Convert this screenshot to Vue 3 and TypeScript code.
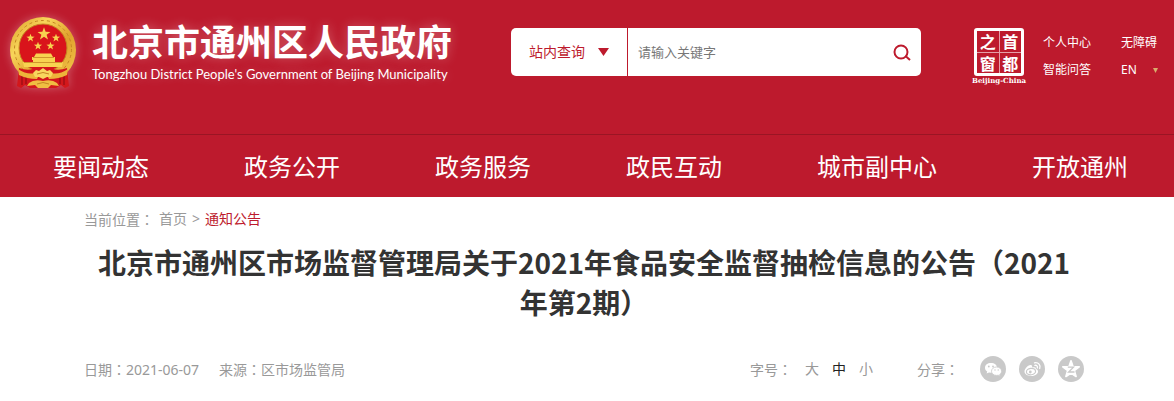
<script setup lang="ts">
import { ref } from 'vue'

const navItems: string[] = ['要闻动态', '政务公开', '政务服务', '政民互动', '城市副中心', '开放通州']
const sizes: string[] = ['大', '中', '小']
const activeSize = ref('中')
const scope = ref('站内查询')
const language = ref('EN')
const keyword = ref('')
const star = '0,-10 2.4,-3.2 9.5,-3.1 3.8,1.2 5.9,8.1 0,4 -5.9,8.1 -3.8,1.2 -9.5,-3.1 -2.4,-3.2'
</script>

<template>
  <div class="page">
    <header class="header">
      <div class="masthead">
        <a class="brand" href="#">
          <svg class="emblem" viewBox="0 0 68 72" aria-hidden="true">
            <defs>
              <linearGradient id="gold" x1="0" y1="0" x2="1" y2="1">
                <stop offset="0" stop-color="#d99a22" />
                <stop offset="0.3" stop-color="#f8d55a" />
                <stop offset="0.6" stop-color="#e0a02c" />
                <stop offset="1" stop-color="#f6cf50" />
              </linearGradient>
            </defs>
            <circle cx="34" cy="33" r="33" fill="url(#gold)" />
            <circle cx="34" cy="32" r="28.500" fill="none" stroke="#c58622" stroke-width="1" stroke-dasharray="3 3" />
            <circle cx="34" cy="31" r="24" fill="#d9141b" stroke="#c58622" />
            <path d="M10 51 Q18 54 24 52 L34 50 L44 52 Q50 54 58 51 L60 69 L56 71 L52 68 L47 71 H21 L16 68 L12 71 L8 69Z" fill="#d3171b" />
            <path d="M13 58V68M17 59V67M51 59V67M55 58V68" stroke="#a30f16" stroke-width="1.500" />
            <g fill="#f8d350">
              <polygon :points="star" transform="translate(35 17) scale(0.680)" />
              <polygon :points="star" transform="translate(21.500 21) scale(0.430)" />
              <polygon :points="star" transform="translate(47 21) scale(0.430)" />
              <polygon :points="star" transform="translate(29 29) scale(0.430)" />
              <polygon :points="star" transform="translate(41.500 29) scale(0.430)" />
              <path d="M27 36.500H42L44 40H46V43H23V40H25ZM24 42H46V45H54L53 50H15L14 45H24Z" />
            </g>
            <path d="M24 40.500H45M15 45.500H53" stroke="#c58622" stroke-width="0.800" />
            <path d="M9 52 Q18 58 26 56 L30 58 L28 62 Q18 62 10 58ZM59 52 Q50 58 42 56 L38 58 L40 62 Q50 62 58 58Z" fill="#edb43a" />
            <path d="M24 56L27 53L30 54L34 51L38 54L41 53L44 56L42 60L38 60L34 62L30 60L26 60Z" fill="#f8d75e" />
            <path d="M28 57Q34 54 40 57" fill="none" stroke="#c58622" stroke-width="1" />
            <path d="M20 66Q25 62 34 64Q43 62 48 66L50 69L42 68L39 71H29L26 68L18 69Z" fill="#f0bd42" />
            <path d="M28 67Q34 64 40 67" fill="none" stroke="#c58622" stroke-width="1" />
          </svg>
          <span class="brand-text">
            <span class="brand-cn">北京市通州区人民政府</span>
            <span class="brand-en">Tongzhou District People's Government of Beijing Municipality</span>
          </span>
        </a>

        <form class="search" role="search" @submit.prevent>
          <label class="scope">
            <select v-model="scope" aria-label="查询范围">
              <option>站内查询</option>
            </select>
            <svg width="11" height="8" viewBox="0 0 11 8" aria-hidden="true"><path d="M0 0H11L5.500 8Z" fill="#bd1a2d" /></svg>
          </label>
          <input v-model="keyword" type="text" placeholder="请输入关键字" aria-label="关键字" />
          <button type="submit" aria-label="搜索">
            <svg width="18" height="18" viewBox="0 0 18 18" fill="none" stroke="#bd1a2d" stroke-width="2" aria-hidden="true">
              <circle cx="8" cy="9" r="6.500" /><path d="M12.500 13L17 17" />
            </svg>
          </button>
        </form>

        <a class="capital" href="#">
          <span class="seal">
            <span>之</span><span>首</span><span>窗</span><span>都</span>
          </span>
          <span class="capital-en">Beijing-China</span>
        </a>

        <div class="tools">
          <a href="#">个人中心</a>
          <a href="#">无障碍</a>
          <a href="#">智能问答</a>
          <label class="language">
            <select v-model="language" aria-label="语言">
              <option>EN</option>
            </select>
            <svg width="5" height="5" viewBox="0 0 5 5" aria-hidden="true"><path d="M0 0H5L2.500 5Z" fill="#d9ae6c" /></svg>
          </label>
        </div>
      </div>

      <nav class="nav">
        <a v-for="item in navItems" :key="item" href="#">{{ item }}</a>
      </nav>
    </header>

    <main class="article">
      <nav class="crumbs">
        <span>当前位置<span class="colon">：</span></span><a href="#">首页</a><span>&gt;</span><a class="current" href="#">通知公告</a>
      </nav>
      <h1>北京市通州区市场监督管理局关于2021年食品安全监督抽检信息的公告（2021年第2期）</h1>
      <div class="meta">
        <span class="date">日期<span class="colon">：</span>2021-06-07</span>
        <span>来源<span class="colon">：</span>区市场监管局</span>
        <div class="sizes">
          <span>字号<span class="colon">：</span></span>
          <button
            v-for="size in sizes"
            :key="size"
            type="button"
            :class="{ active: size === activeSize }"
            @click="activeSize = size"
          >{{ size }}</button>
        </div>
        <div class="share">
          <span>分享<span class="colon">：</span></span>
          <a href="#" aria-label="微信">
            <svg viewBox="0 0 26 26" aria-hidden="true">
              <circle cx="13" cy="13" r="13" fill="#c9c9c9" />
              <path d="M11 7C7.500 7 5 9 5 11.800C5 13.400 5.800 14.700 7.200 15.600L6.600 17.600L9 16.400L11 16.700C15 16.700 17 14.300 17 11.800C17 9 14.500 7 11 7Z" fill="#fff" />
              <path d="M16.500 11C13.500 11 11.500 13 11.500 15.200C11.500 17.700 13.800 19.400 16.500 19.400L18.200 19.200L20.200 20.200L19.700 18.500C20.900 17.700 21.600 16.500 21.600 15.200C21.600 13 19.500 11 16.500 11Z" fill="#fff" stroke="#c9c9c9" stroke-width="0.800" />
              <g fill="#c9c9c9"><circle cx="8.800" cy="10.500" r="0.900" /><circle cx="13" cy="10.500" r="0.900" /><circle cx="15" cy="14" r="0.700" /><circle cx="18.200" cy="14" r="0.700" /></g>
            </svg>
          </a>
          <a href="#" aria-label="微博">
            <svg viewBox="0 0 26 26" aria-hidden="true">
              <circle cx="13" cy="13" r="13" fill="#c9c9c9" />
              <path d="M11.500 9C8.500 9.500 5.500 12.800 5.500 15.600C5.500 18.300 8.500 20 12 20C16 20 19 17.800 19 15.400C19 14 18 13.300 16.800 13C17.300 11.300 16 10.600 13 11.600C13.500 10 13 8.900 11.500 9Z" fill="#fff" />
              <ellipse cx="12" cy="15.600" rx="4.600" ry="3.200" fill="none" stroke="#c9c9c9" stroke-width="1.200" transform="rotate(-8 12 15.600)" />
              <circle cx="11.300" cy="16" r="1.400" fill="#c9c9c9" />
              <path d="M15.500 6.800C19.500 6 22 9.200 20.700 12.500M15.900 9.300C17.700 9 18.900 10.300 18.300 12" fill="none" stroke="#fff" stroke-width="1.300" stroke-linecap="round" />
            </svg>
          </a>
          <a href="#" aria-label="QQ空间">
            <svg viewBox="0 0 26 26" aria-hidden="true">
              <circle cx="13" cy="13" r="13" fill="#c9c9c9" />
              <polygon :points="star" transform="translate(13 13.500) scale(0.860)" fill="#fff" stroke="#fff" stroke-width="2" stroke-linejoin="round" />
              <path d="M9.800 11.200H15.500L10.600 16H16.500" fill="none" stroke="#c9c9c9" stroke-width="1.300" />
            </svg>
          </a>
        </div>
      </div>
    </main>
  </div>
</template>

<style>
body {
  margin: 0;
  background: #fff;
}
</style>

<style scoped>
.page {
  font-family: "Noto Sans", "Noto Sans CJK SC", sans-serif;
  font-size: 14px;
  line-height: 20px;
  color: #999;
}
a {
  color: inherit;
  text-decoration: none;
}
button,
select,
input {
  font: inherit;
  color: inherit;
  border: 0;
  padding: 0;
  margin: 0;
  background: none;
  outline: none;
}
select {
  appearance: none;
  cursor: pointer;
}
svg {
  display: block;
}
.colon {
  font-family: "Noto Sans CJK TC", sans-serif;
}
.header {
  background: #bd1a2d;
  color: #fff;
}
.masthead {
  display: flex;
  align-items: flex-start;
  padding: 17px 16px 45px 9px;
}
.brand {
  display: flex;
  gap: 15px;
  flex: none;
  width: 444px;
}
.emblem {
  width: 68px;
  height: 72px;
  filter: drop-shadow(0 0 5px rgba(255, 255, 255, 0.3));
}
.brand-text {
  display: flex;
  flex-direction: column;
  gap: 3px;
  white-space: nowrap;
  text-shadow: 0 0 12px rgba(255, 255, 255, 0.3);
}
.brand-cn {
  font-family: "Noto Sans CJK SC", sans-serif;
  font-size: 36px;
  font-weight: 700;
  line-height: 46px;
}
.brand-en {
  font-family: Lato, sans-serif;
  font-size: 13px;
  line-height: 16px;
}
.search {
  display: flex;
  flex: 1;
  min-width: 0;
  height: 48px;
  margin: 11px 50px 0 58px;
  overflow: hidden;
  border-radius: 5px;
  background: #fff;
}
.scope {
  display: flex;
  align-items: center;
  gap: 13px;
  padding: 0 18px;
  border-right: 1px solid #bd1a2d;
  color: #bd1a2d;
}
.search input {
  flex: 1;
  min-width: 0;
  padding: 0 10px;
  font-size: 13px;
  color: #777;
}
.search input::placeholder {
  color: #777;
  opacity: 1;
}
.search button {
  display: grid;
  place-items: center;
  width: 38px;
  cursor: pointer;
}
.capital {
  display: flex;
  flex-direction: column;
  align-items: center;
  width: 56px;
  margin: 11px 16px 0 0;
}
.seal {
  display: grid;
  grid-template-columns: 1fr 1fr;
  gap: 1px;
  box-sizing: border-box;
  width: 50px;
  height: 48px;
  border: 3px solid #fff;
  border-radius: 3px;
  background: linear-gradient(#e5a0a8, #e5a0a8) center / 1px 100% no-repeat,
    linear-gradient(#e5a0a8, #e5a0a8) center / 100% 1px no-repeat;
  font-family: "Noto Sans CJK SC", sans-serif;
  font-size: 16px;
  font-weight: 700;
  line-height: 20px;
  text-align: center;
}
.capital-en {
  font-family: "DejaVu Serif", serif;
  font-size: 7px;
  font-weight: 700;
  line-height: 10px;
}
.tools {
  display: grid;
  grid-template-columns: 48px 37px;
  column-gap: 30px;
  row-gap: 7px;
  margin-top: 16px;
  font-size: 12px;
  white-space: nowrap;
}
.language {
  display: flex;
  align-items: center;
  justify-content: space-between;
}
.nav {
  display: flex;
  justify-content: space-between;
  padding: 14px 46px 12px 53px;
  border-top: 1px solid #9a1524;
  font-size: 24px;
  line-height: 36px;
  white-space: nowrap;
}
.article {
  padding: 12px 90px 20px 84px;
}
.crumbs {
  display: flex;
  gap: 5px;
}
.crumbs .current {
  color: #bd1a2d;
}
h1 {
  margin: 12px 0 34px;
  padding: 0 8px;
  color: #333;
  font-family: "Noto Sans CJK SC", sans-serif;
  font-size: 28px;
  font-weight: 700;
  line-height: 40px;
  text-align: center;
}
.meta {
  display: flex;
  align-items: center;
}
.date {
  margin-right: 20px;
}
.sizes {
  display: flex;
  gap: 13px;
  margin-left: auto;
}
.sizes button {
  cursor: pointer;
}
.sizes .active {
  color: #222;
}
.share {
  display: flex;
  align-items: center;
  gap: 13px;
  margin-left: 44px;
}
.share > span {
  margin-right: 8px;
}
.share svg {
  width: 26px;
  height: 26px;
}
</style>
